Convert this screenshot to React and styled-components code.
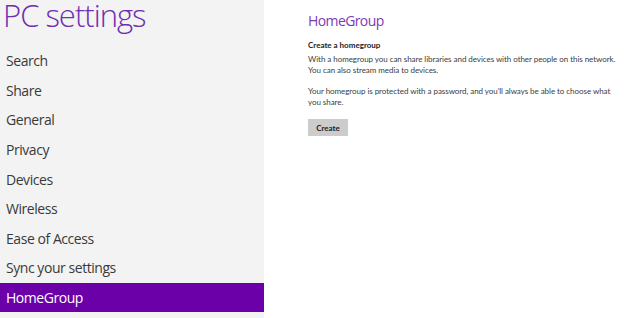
import React from 'react'
import styled, { createGlobalStyle } from 'styled-components'

const GlobalStyle = createGlobalStyle`
  html, body {
    margin: 0;
    padding: 0;
    background: #ffffff;
    overflow: hidden;
  }
  body {
    font-family: "Open Sans", "Noto Sans", "Liberation Sans", sans-serif;
  }
`

const items = [
  'Search',
  'Share',
  'General',
  'Privacy',
  'Devices',
  'Wireless',
  'Ease of Access',
  'Sync your settings',
  'HomeGroup',
]

export default function App() {
  return (
    <>
      <GlobalStyle />
      <Page>
        <Sidebar>
          <Title>PC settings</Title>
          <Menu>
            {items.map((item) => (
              <MenuItem key={item} $active={item === 'HomeGroup'}>
                {item}
              </MenuItem>
            ))}
          </Menu>
        </Sidebar>
        <Content>
          <Heading>HomeGroup</Heading>
          <SubHeading>Create a homegroup</SubHeading>
          <Text>
            With a homegroup you can share libraries and devices with other people on this network.
            <br />
            You can also stream media to devices.
          </Text>
          <Text>
            Your homegroup is protected with a password, and you'll always be able to choose what
            <br />
            you share.
          </Text>
          <Button>Create</Button>
        </Content>
      </Page>
    </>
  )
}

const Page = styled.div`
  display: grid;
  grid-template-columns: 264px 1fr;
  width: 624px;
  height: 318px;
`

const Sidebar = styled.div`
  background: #f3f3f3;
  display: flex;
  flex-direction: column;
`

const Title = styled.h1`
  margin: 0 0 15px;
  padding: 0 0 0 3px;
  font-size: 31px;
  font-weight: 300;
  line-height: 31px;
  color: #6f2fb0;
  letter-spacing: -1px;
  white-space: nowrap;
`

const Menu = styled.div`
  display: flex;
  flex-direction: column;
`

const MenuItem = styled.div`
  height: 29.6px;
  display: flex;
  align-items: center;
  padding-left: 6px;
  font-size: 14px;
  font-weight: 400;
  color: ${(p) => (p.$active ? '#ffffff' : '#3a3a3a')};
  background: ${(p) => (p.$active ? '#6b00a8' : 'transparent')};
  letter-spacing: -0.45px;
  white-space: nowrap;
`

const Content = styled.div`
  padding: 11px 0 0 44px;
  display: flex;
  flex-direction: column;
  align-items: flex-start;
  font-family: Lato, "Liberation Sans", sans-serif;
`

const Heading = styled.h2`
  margin: 0;
  font-family: "Open Sans", "Noto Sans", sans-serif;
  font-size: 14px;
  font-weight: 400;
  line-height: 20px;
  color: #7a3bb5;
  letter-spacing: -0.6px;
`

const SubHeading = styled.div`
  margin-top: 9px;
  font-size: 8px;
  font-weight: 700;
  color: #222;
  line-height: 11px;
`

const Text = styled.p`
  margin: 3px 0 7px;
  font-size: 8px;
  line-height: 11px;
  color: #3c3c3c;
  letter-spacing: -0.05px;
  white-space: nowrap;
`

const Button = styled.div`
  margin-top: 4px;
  width: 40px;
  height: 17px;
  background: #cccccc;
  display: flex;
  align-items: center;
  justify-content: center;
  font-size: 8px;
  font-weight: 700;
  color: #222;
`
